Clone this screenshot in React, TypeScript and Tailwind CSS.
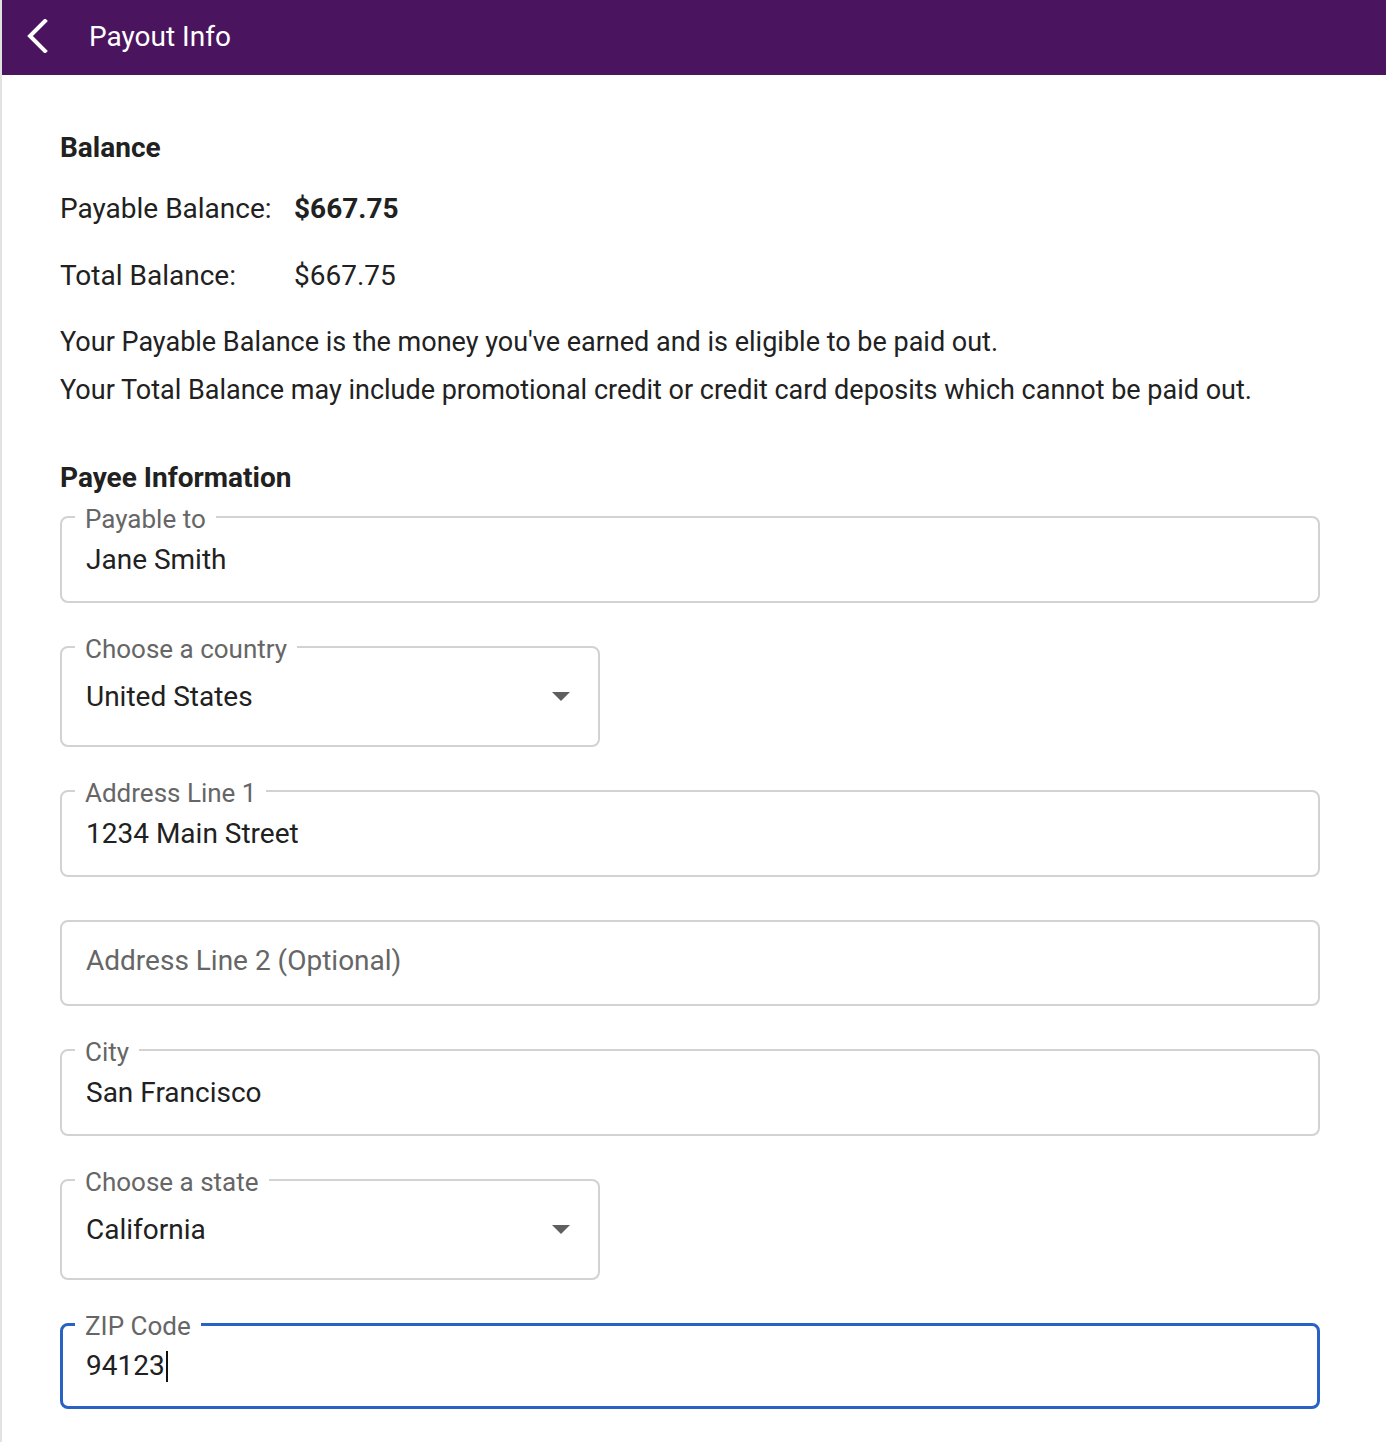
import React from "react"

const font = { fontFamily: "Roboto, 'Liberation Sans', sans-serif" }

function Caret() {
  return (
    <svg width="18" height="10" viewBox="0 0 18 10" className="shrink-0">
      <path d="M0 0 L18 0 L9 9 Z" fill="#5f5f5f" />
    </svg>
  )
}

function Legend({ children }: { children: React.ReactNode }) {
  return (
    <legend className="-ml-[11px] px-[10px] text-[26px] leading-[30px] text-[#666666]">
      <span className="relative top-[2px]">{children}</span>
    </legend>
  )
}

function Field({
  label,
  value,
  width = "w-full",
  select = false,
}: {
  label: string
  value: string
  width?: string
  select?: boolean
}) {
  return (
    <fieldset
      className={`${width} rounded-lg border-2 border-[#d2d2d2] px-[24px] ${select ? "pb-[30px]" : "pb-[23px]"}`}
    >
      <Legend>{label}</Legend>
      <div
        className={`flex items-center justify-between pr-[4px] text-[28px] leading-[36px] text-[#212121] ${select ? "mt-[17px]" : "mt-[10px]"}`}
      >
        <span>{value}</span>
        {select && <Caret />}
      </div>
    </fieldset>
  )
}

export default function App() {
  return (
    <div className="min-h-screen border-l-2 border-[#e2e2e2] bg-white" style={font}>
      {/* App bar */}
      <header className="flex h-[75px] items-center bg-[#4a155e] text-white">
        <button className="-mt-[4px] ml-[21px] flex h-[40px] w-[28px] items-center justify-center">
          <svg width="22" height="34" viewBox="0 0 22 34" fill="none">
            <path d="M19 2 L4 17 L19 32" stroke="white" strokeWidth="4" strokeLinecap="square" />
          </svg>
        </button>
        <h1 className="-mt-[2px] ml-[38px] text-[28px] font-normal leading-none">Payout Info</h1>
      </header>

      <main className="pl-[58px] pr-[66px] pb-[30px] text-[#212121]">
        {/* Balance */}
        <h2 className="mt-[55px] text-[28px] font-bold leading-[36px]">Balance</h2>
        <div className="mt-[25px] flex text-[28px] leading-[36px]">
          <span className="w-[234px]">Payable Balance:</span>
          <span className="font-bold">$667.75</span>
        </div>
        <div className="mt-[31px] flex text-[28px] leading-[36px]">
          <span className="w-[234px]">Total Balance:</span>
          <span>$667.75</span>
        </div>
        <p className="mt-[30px] text-[27px] leading-[36px]">
          Your Payable Balance is the money you've earned and is eligible to be paid out.
        </p>
        <p className="mt-[12px] text-[27px] leading-[36px]">
          Your Total Balance may include promotional credit or credit card deposits which cannot be paid out.
        </p>

        {/* Payee */}
        <h2 className="mt-[52px] text-[28px] font-bold leading-[36px]">Payee Information</h2>
        <div className="mt-[6px] flex flex-col gap-[29px]">
          <Field label="Payable to" value="Jane Smith" />
          <Field label="Choose a country" value="United States" width="w-[540px]" select />
          <Field label="Address Line 1" value="1234 Main Street" />
          <div className="mt-[14px] rounded-lg border-2 border-[#d2d2d2] px-[24px] pt-[21px] pb-[25px] text-[28px] leading-[36px] text-[#666666]">
            Address Line 2 (Optional)
          </div>
          <Field label="City" value="San Francisco" />
          <Field label="Choose a state" value="California" width="w-[540px]" select />
          <fieldset className="w-full rounded-lg border-[3px] border-[#2862c4] px-[23px] pb-[22px]">
            <Legend>ZIP Code</Legend>
            <div className="mt-[9px] flex items-center text-[28px] leading-[36px] text-[#212121]">
              <span>94123</span>
              <span className="ml-[1px] h-[31px] w-[2px] bg-[#111111]" />
            </div>
          </fieldset>
        </div>
      </main>
    </div>
  )
}
